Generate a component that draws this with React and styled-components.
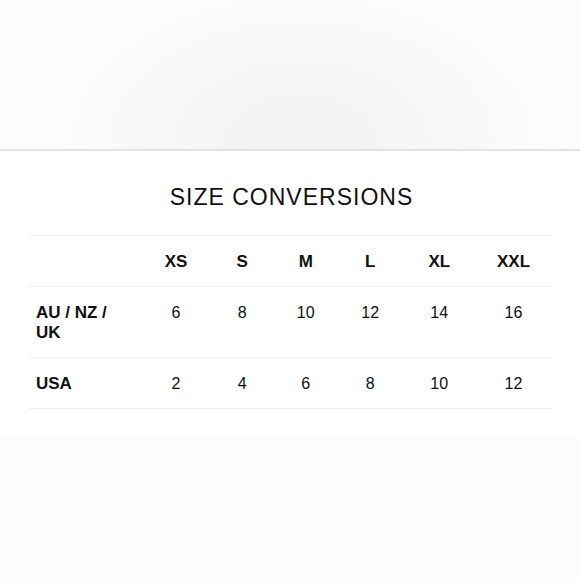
import React from "react";
import styled, { createGlobalStyle } from "styled-components";

const Global = createGlobalStyle`
  html, body { margin: 0; padding: 0; background: #ffffff; }
  body { font-family: "Liberation Sans", Arial, sans-serif; color: #111; }
`;

const Page = styled.div`
  width: 580px;
  height: 580px;
  display: flex;
  flex-direction: column;
  overflow: hidden;
  background: #ffffff;
`;

const Banner = styled.div`
  height: 149px;
  flex: none;
  background: radial-gradient(ellipse 45% 110% at 52% 95%, #f2f2f2 0%, #f6f6f6 45%, #fdfdfd 100%);
  border-bottom: 2px solid #e2e2e2;
`;

const Section = styled.section`
  padding: 32px 28px 0 29px;
  display: flex;
  flex-direction: column;
`;

const Title = styled.h2`
  margin: 0 0 24px 0;
  font-family: "Liberation Sans", Arial, sans-serif;
  font-size: 23px;
  line-height: 28px;
  font-weight: 400;
  letter-spacing: 1px;
  text-align: center;
  color: #111;
  padding-left: 2px;
`;

const Grid = styled.div`
  display: grid;
  grid-template-columns: 113px 68px 64.5px 62.5px 66.5px 71.5px 77px;
  border-top: 1px solid #f0f0ee;
`;

const Cell = styled.div`
  padding: 16px 7px 14px;
  padding-right: ${(p) => (p.$left ? "18px" : "7px")};
  font-size: ${(p) => (p.$bold ? "17px" : "16px")};
  line-height: 20px;
  font-weight: ${(p) => (p.$bold ? 700 : 400)};
  text-align: ${(p) => (p.$left ? "left" : "center")};
  border-bottom: 1px solid #f0f0ee;
  color: #111;
`;

const Footer = styled.div`
  flex: 1;
  margin-top: 28px;
  background: linear-gradient(180deg, #fcfcfc 0%, #fdfdfd 100%);
`;

const sizes = ["XS", "S", "M", "L", "XL", "XXL"];
const rows = [
  { label: "AU / NZ / UK", values: [6, 8, 10, 12, 14, 16] },
  { label: "USA", values: [2, 4, 6, 8, 10, 12] },
];

export default function App() {
  return (
    <>
      <Global />
      <Page>
        <Banner />
        <Section>
          <Title>SIZE CONVERSIONS</Title>
          <Grid>
            <Cell $left $bold />
            {sizes.map((s) => (
              <Cell key={s} $bold>
                {s}
              </Cell>
            ))}
            {rows.map((r) => (
              <React.Fragment key={r.label}>
                <Cell $left $bold>
                  {r.label}
                </Cell>
                {r.values.map((v, i) => (
                  <Cell key={i}>{v}</Cell>
                ))}
              </React.Fragment>
            ))}
          </Grid>
        </Section>
        <Footer />
      </Page>
    </>
  );
}
